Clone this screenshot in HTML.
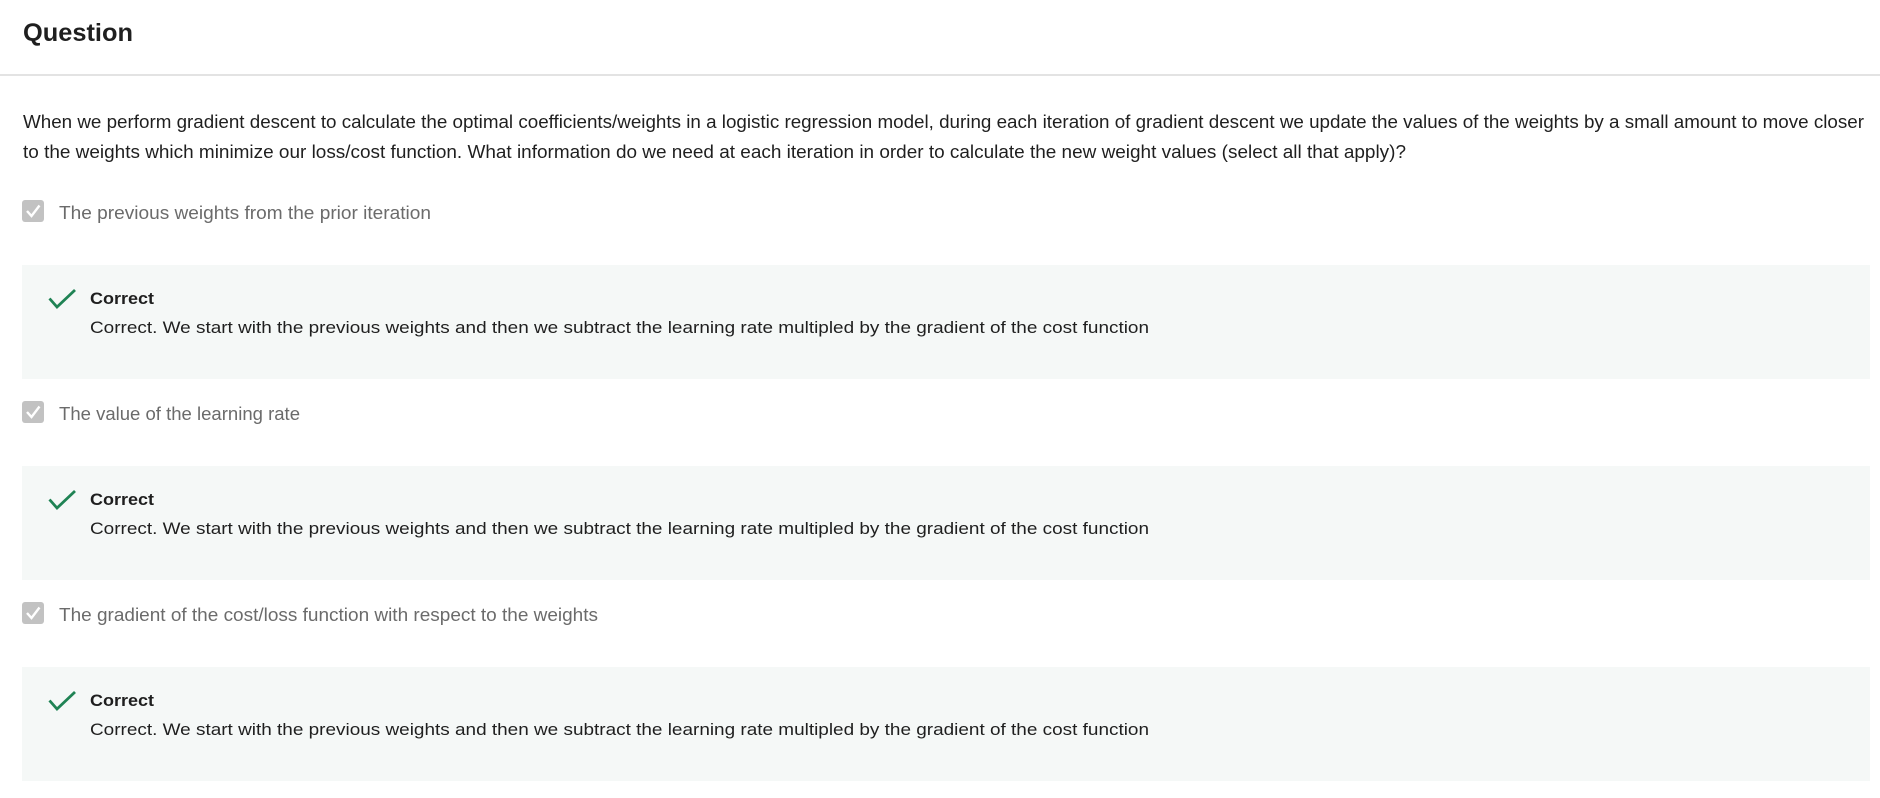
<!DOCTYPE html>
<html><head><meta charset="utf-8"><style>
html,body{margin:0;padding:0;background:#fff;width:1880px;height:798px;overflow:hidden}
svg{display:block}
text{font-family:"Liberation Sans",sans-serif}
</style></head><body>
<svg width="1880" height="798" viewBox="0 0 1880 798" xmlns="http://www.w3.org/2000/svg">
<text x="23" y="41" font-size="25" font-weight="bold" fill="#1f1f1f" textLength="110" lengthAdjust="spacingAndGlyphs">Question</text>
<rect x="0" y="74" width="1880" height="2" fill="#e3e3e3"/>
<text x="23" y="128" font-size="18" fill="#1f1f1f" textLength="1841" lengthAdjust="spacingAndGlyphs">When we perform gradient descent to calculate the optimal coefficients/weights in a logistic regression model, during each iteration of gradient descent we update the values of the weights by a small amount to move closer</text>
<text x="23" y="158" font-size="18" fill="#1f1f1f" textLength="1383" lengthAdjust="spacingAndGlyphs">to the weights which minimize our loss/cost function.  What information do we need at each iteration in order to calculate the new weight values (select all that apply)?</text>

<g id="blk">
<rect x="22" y="200" width="22" height="22" rx="3" fill="#c2c2c2"/>
<path d="M27 211 L31.5 216 L39.5 205.5" stroke="#fff" stroke-width="2.4" fill="none"/>
<rect x="22" y="265" width="1848" height="114" fill="#f5f8f7"/>
<path d="M49.5 298.5 L57 307 L75 290" stroke="#1f8354" stroke-width="2.8" fill="none"/>
<text x="90" y="304" font-size="17" font-weight="bold" fill="#1f1f1f" textLength="64" lengthAdjust="spacingAndGlyphs">Correct</text>
<text x="90" y="333" font-size="17" fill="#1f1f1f" textLength="1059" lengthAdjust="spacingAndGlyphs">Correct.  We start with the previous weights and then we subtract the learning rate multipled by the gradient of the cost function</text>
</g>
<text x="59" y="219" font-size="18" fill="#6b6b6b" textLength="372" lengthAdjust="spacingAndGlyphs">The previous weights from the prior iteration</text>
<use href="#blk" y="201"/>
<text x="59" y="420" font-size="18" fill="#6b6b6b" textLength="241" lengthAdjust="spacingAndGlyphs">The value of the learning rate</text>
<use href="#blk" y="402"/>
<text x="59" y="621" font-size="18" fill="#6b6b6b" textLength="539" lengthAdjust="spacingAndGlyphs">The gradient of the cost/loss function with respect to the weights</text>
</svg>
</body></html>
